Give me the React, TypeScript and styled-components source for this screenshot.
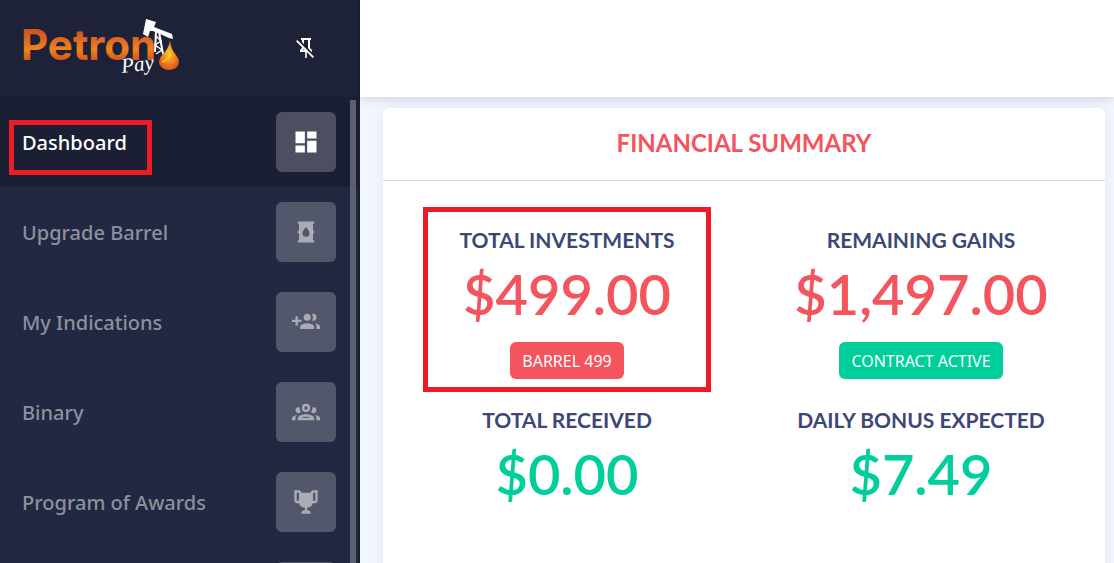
import React from "react";
import styled, { createGlobalStyle, css } from "styled-components";

const GlobalStyle = createGlobalStyle`
  * { box-sizing: border-box; }
  body { margin: 0; background: #f2f6fd; font-family: "Noto Sans", "Open Sans", sans-serif; }
`;

const Page = styled.div`
  display: flex;
  height: 100vh;
  overflow: hidden;
`;

const Sidebar = styled.aside`
  position: relative;
  z-index: 2;
  flex: 0 0 360px;
  display: flex;
  flex-direction: column;
  background: #222842;
  border-right: 2px solid #1a1e34;
`;

const Brand = styled.div`
  flex: 0 0 97px;
  display: flex;
  align-items: center;
  justify-content: space-between;
  padding: 0 40px 2px 20px;
  background: #1e2238;
`;

const HomeLink = styled.a`
  display: block;
  height: 64px;
`;

const PinButton = styled.button`
  display: flex;
  padding: 0;
  border: 0;
  background: none;
  color: #fff;
  cursor: pointer;
`;

const Nav = styled.nav`
  position: relative;
  flex: 1;
  min-height: 0;
  overflow: hidden;
`;

const ScrollThumb = styled.div`
  position: absolute;
  top: 3px;
  right: 2px;
  bottom: 0;
  width: 6px;
  background: #5c6075;
`;

const NavItem = styled.a<{ $active?: boolean }>`
  display: flex;
  align-items: center;
  justify-content: space-between;
  height: 90px;
  padding: 0 22px;
  font-size: 20px;
  line-height: 30px;
  font-weight: 500;
  text-decoration: none;
  color: #8d909d;
  ${(p) => p.$active && css`
    color: #fff;
    background: #1b1f33;
  `}
`;

const NavLabel = styled.span`
  position: relative;
  padding-top: 2px;
`;

const Tile = styled.span<{ $active?: boolean }>`
  display: flex;
  align-items: center;
  justify-content: center;
  width: 60px;
  height: 60px;
  border-radius: 6px;
  background: ${(p) => (p.$active ? "#4c4f60" : "#53576b")};
  color: ${(p) => (p.$active ? "#fff" : "#a9abb5")};
`;

const Main = styled.main`
  flex: 1;
  min-width: 0;
  display: flex;
  flex-direction: column;
`;

const TopBar = styled.header`
  flex: 0 0 97px;
  background: #fff;
  box-shadow: 0 0 10px 1px rgba(69, 90, 130, 0.25);
`;

const Content = styled.div`
  flex: 1;
  display: flex;
  padding: 11px 9px 0 23px;
`;

const Card = styled.section`
  flex: 1;
  background: #fff;
  border-radius: 6px 6px 0 0;
  box-shadow: 0 0 12px rgba(90, 120, 180, 0.1);
`;

const CardTitle = styled.h2`
  margin: 0;
  padding: 17px 0 19px;
  border-bottom: 1px solid #d0dde6;
  font: 700 24px/36px Lato, sans-serif;
  text-align: center;
  color: #f3545d;
`;

const Stats = styled.div`
  display: grid;
  grid-template-columns: 1fr 1fr;
  padding: 30px 7px;
`;

const Stat = styled.div`
  position: relative;
  display: flex;
  flex-direction: column;
  align-items: center;
  height: 180px;
  padding-top: 14px;
`;

const StatLabel = styled.h3`
  margin: 0;
  font: 700 21px/30px Lato, sans-serif;
  color: #3d4777;
`;

const Amount = styled.div<{ $tone: string }>`
  font: 600 56px/78px Lato, sans-serif;
  color: ${(p) => p.$tone};
`;

const Badge = styled.span<{ $tone: string }>`
  margin-top: 9px;
  padding: 1px 12px 0;
  border-radius: 6px;
  font-size: 16px;
  line-height: 36px;
  color: #fff;
  background: ${(p) => p.$tone};
`;

const Marker = styled.span<{ $area: string }>`
  position: absolute;
  inset: ${(p) => p.$area};
  border: 5px solid #ed1c24;
  pointer-events: none;
`;

const RED = "#f3545d";
const GREEN = "#00ce9b";

const ICONS = {
  pinOff:
    "M8,6.2V4H7V2H17V4H16V12L18,14V16H17.8L14,12.2V4H10V8.2L8,6.2M20,20.7L18.7,22L12.8,16.1V22H11.2V16H6V14L8,12V11.3L2,5.3L3.3,4L20,20.7M8.8,14H10.6L9.7,13.1L8.8,14Z",
  dashboard: "M13,3V9H21V3M13,21H21V11H13M3,21H11V15H3M3,13H11V3H3V13Z",
  barrel:
    "M18,19H19V21H5V19H6V13H5V11H6V5H5V3H19V5H18V11H19V13H18V19M9,13A3,3 0 0,0 12,16A3,3 0 0,0 15,13C15,11 12,7.63 12,7.63C12,7.63 9,11 9,13Z",
  groupAdd:
    "M13,13C11,13 7,14 7,16V18H19V16C19,14 15,13 13,13M19.62,13.16C20.45,13.88 21,14.82 21,16V18H24V16C24,14.46 21.63,13.5 19.62,13.16M13,11A3,3 0 0,0 16,8A3,3 0 0,0 13,5A3,3 0 0,0 10,8A3,3 0 0,0 13,11M18,11A3,3 0 0,0 21,8A3,3 0 0,0 18,5C17.68,5 17.37,5.05 17.08,5.14C17.65,5.95 18,6.94 18,8C18,9.06 17.65,10.04 17.08,10.85C17.37,10.95 17.68,11 18,11M8,10H5V7H3V10H0V12H3V15H5V12H8V10Z",
  group:
    "M12,5A3.5,3.5 0 0,0 8.5,8.5A3.5,3.5 0 0,0 12,12A3.5,3.5 0 0,0 15.5,8.5A3.5,3.5 0 0,0 12,5M12,7A1.5,1.5 0 0,1 13.5,8.5A1.5,1.5 0 0,1 12,10A1.5,1.5 0 0,1 10.5,8.5A1.5,1.5 0 0,1 12,7M5.5,8A2.5,2.5 0 0,0 3,10.5C3,11.44 3.53,12.25 4.29,12.68C4.65,12.88 5.06,13 5.5,13C5.94,13 6.35,12.88 6.71,12.68C7.08,12.47 7.39,12.17 7.62,11.81C6.89,10.86 6.5,9.7 6.5,8.5C6.5,8.41 6.5,8.31 6.5,8.22C6.2,8.08 5.86,8 5.5,8M18.5,8C18.14,8 17.8,8.08 17.5,8.22C17.5,8.31 17.5,8.41 17.5,8.5C17.5,9.7 17.11,10.86 16.38,11.81C16.5,12 16.63,12.15 16.78,12.3C16.94,12.45 17.1,12.58 17.29,12.68C17.65,12.88 18.06,13 18.5,13C18.94,13 19.35,12.88 19.71,12.68C20.47,12.25 21,11.44 21,10.5A2.5,2.5 0 0,0 18.5,8M12,14C9.66,14 5,15.17 5,17.5V19H19V17.5C19,15.17 14.34,14 12,14M4.71,14.55C2.78,14.78 0,15.76 0,17.5V19H3V17.07C3,16.06 3.69,15.22 4.71,14.55M19.29,14.55C20.31,15.22 21,16.06 21,17.07V19H24V17.5C24,15.76 21.22,14.78 19.29,14.55M12,16C13.53,16 15.24,16.5 16.23,17H7.77C8.76,16.5 10.47,16 12,16Z",
  trophy:
    "M20.2,2H19.5H18C17.1,2 16,3 16,4H8C8,3 6.9,2 6,2H4.5H3.8H2V11C2,12 3,13 4,13H6.2C6.6,15 7.9,16.7 11,17V19.1C8.8,19.3 8,20.4 8,21.7V22H16V21.7C16,20.4 15.2,19.3 13,19.1V17C16.1,16.7 17.4,15 17.8,13H20C21,13 22,12 22,11V2H20.2M4,11V4H6V6V11C5.1,11 4.3,11 4,11M20,11C19.7,11 18.9,11 18,11V6V4H20V11Z",
};

function Icon({ path, size = 28 }: { path: string; size?: number }) {
  return (
    <svg width={size} height={size} viewBox="0 0 24 24" fill="currentColor" aria-hidden="true">
      <path d={path} />
    </svg>
  );
}

function Logo() {
  return (
    <svg width="164" height="64" viewBox="0 0 164 64">
      <defs>
        <linearGradient id="word" x1="0" y1="0" x2="0" y2="1">
          <stop offset="0.25" stopColor="#d2541f" />
          <stop offset="0.6" stopColor="#ef831f" />
          <stop offset="0.8" stopColor="#d4581c" />
        </linearGradient>
        <radialGradient id="drop" cx="0.5" cy="0.45" r="0.6">
          <stop offset="0" stopColor="#ffc928" />
          <stop offset="0.5" stopColor="#f28a1c" />
          <stop offset="1" stopColor="#d9501a" />
        </radialGradient>
      </defs>
      <text x="1" y="44" fontFamily="Inter, sans-serif" fontWeight="700" fontSize="42" fill="url(#word)">
        Petron
      </text>
      <g stroke="#fff" fill="none">
        <path d="M136 15L135 36M139 16L143 38" strokeWidth="2" />
        <path d="M136 20L141 25L135 29L142 34L136 38" strokeWidth="1.5" />
      </g>
      <path d="M126 3L136 6L134 11L152 18L153 23L149 22L133 15L130 15L128 21L123 18Z" fill="#fff" />
      <path d="M150 24Q151 34 156 39Q162 47 156 52Q149 56 142 52Q136 46 142 39Q149 33 150 24Z" fill="url(#drop)" />
      <path d="M142 46Q148 44 151 38" stroke="#ffd83a" strokeWidth="1.5" fill="none" />
      <text
        x="102"
        y="57"
        transform="rotate(-7 102 57)"
        fontFamily="'Liberation Serif', serif"
        fontStyle="italic"
        fontSize="21"
        fill="#fff"
      >
        Pay
      </text>
    </svg>
  );
}

const NAV = [
  { label: "Dashboard", icon: ICONS.dashboard, active: true },
  { label: "Upgrade Barrel", icon: ICONS.barrel },
  { label: "My Indications", icon: ICONS.groupAdd },
  { label: "Binary", icon: ICONS.group },
  { label: "Program of Awards", icon: ICONS.trophy },
  { label: "", icon: "" },
];

const STATS = [
  { label: "TOTAL INVESTMENTS", amount: "$499.00", tone: RED, badge: "BARREL 499", marked: true },
  { label: "REMAINING GAINS", amount: "$1,497.00", tone: RED, badge: "CONTRACT ACTIVE", badgeTone: GREEN },
  { label: "TOTAL RECEIVED", amount: "$0.00", tone: GREEN },
  { label: "DAILY BONUS EXPECTED", amount: "$7.49", tone: GREEN },
];

export default function App() {
  return (
    <Page>
      <GlobalStyle />
      <Sidebar>
        <Brand>
          <HomeLink href="#">
            <Logo />
          </HomeLink>
          <PinButton type="button">
            <Icon path={ICONS.pinOff} size={24} />
          </PinButton>
        </Brand>
        <Nav>
          {NAV.map((item) => (
            <NavItem key={item.label} href="#" $active={item.active}>
              <NavLabel>
                {item.label}
                {item.active && <Marker $area="-6px -25px -17px -13px" />}
              </NavLabel>
              <Tile $active={item.active}>
                <Icon path={item.icon} />
              </Tile>
            </NavItem>
          ))}
          <ScrollThumb />
        </Nav>
      </Sidebar>
      <Main>
        <TopBar />
        <Content>
          <Card>
            <CardTitle>FINANCIAL SUMMARY</CardTitle>
            <Stats>
              {STATS.map((s) => (
                <Stat key={s.label}>
                  <StatLabel>{s.label}</StatLabel>
                  <Amount $tone={s.tone}>{s.amount}</Amount>
                  {s.badge && <Badge $tone={s.badgeTone ?? s.tone}>{s.badge}</Badge>}
                  {s.marked && <Marker $area="-4px 33px -1px 33px" />}
                </Stat>
              ))}
            </Stats>
          </Card>
        </Content>
      </Main>
    </Page>
  );
}
